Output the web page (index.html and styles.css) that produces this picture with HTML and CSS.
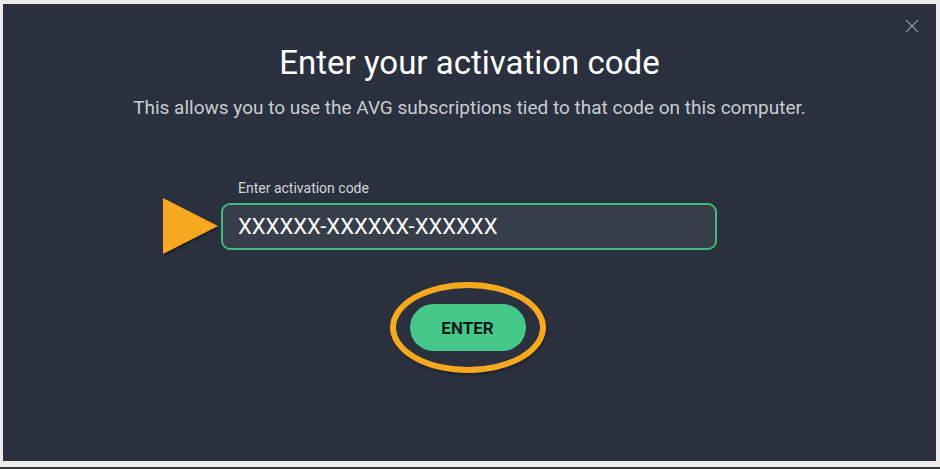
FILE: index.html
```html
<!DOCTYPE html>
<html>
<head>
<meta charset="utf-8">
<link rel="stylesheet" href="styles.css">
</head>
<body>
<div class="frame">
  <div class="panel">
    <button class="close" aria-label="Close">
      <svg width="14" height="14" viewBox="0 0 14 14"><path d="M1 1L13 13M13 1L1 13" stroke="#8a8f99" stroke-width="1.3" fill="none"/></svg>
    </button>
    <h1 class="title">Enter your activation code</h1>
    <p class="subtitle">This allows you to use the AVG subscriptions tied to that code on this computer.</p>
    <div class="field">
      <label class="label">Enter activation code</label>
      <div class="input-row">
        <svg class="pointer" width="56" height="56" viewBox="0 0 56 56"><polygon points="0,0 55,28 0,56" fill="#f6a91f"/></svg>
        <div class="input">XXXXXX-XXXXXX-XXXXXX</div>
      </div>
    </div>
    <div class="btn-wrap">
      <div class="ring"></div>
      <button class="enter">ENTER</button>
    </div>
  </div>
  <div class="bottom-bar"></div>
</div>
</body>
</html>
```
FILE: styles.css
```css
html, body {
  margin: 0;
  padding: 0;
}
body {
  background: #ebebeb;
  width: 940px;
  height: 469px;
  overflow: hidden;
  font-family: Roboto, "Liberation Sans", sans-serif;
}
.frame {
  padding: 4px 4px 0 3px;
  display: flex;
  flex-direction: column;
}
.panel {
  position: relative;
  height: 457px;
  background: #2a303d;
  display: flex;
  flex-direction: column;
  align-items: center;
  box-sizing: border-box;
  padding-top: 39px;
}
.bottom-bar {
  margin-top: 6px;
  height: 3px;
  background: #3a3a3a;
  margin-left: -3px;
  margin-right: -4px;
}
.close {
  position: absolute;
  top: 15px;
  right: 17px;
  background: none;
  border: 0;
  padding: 0;
  width: 14px;
  height: 14px;
  display: flex;
}
.title {
  margin: 0;
  font-weight: 400;
  font-size: 33px;
  line-height: 40px;
  color: #ffffff;
}
.subtitle {
  margin: 13px 0 0;
  font-size: 19px;
  line-height: 24px;
  color: #c9ccd2;
}
.field {
  align-self: flex-start;
  margin-top: 59px;
  margin-left: 160px;
  display: flex;
  flex-direction: column;
}
.label {
  margin-left: 75px;
  font-size: 14px;
  line-height: 18px;
  color: #d2d5da;
}
.input-row {
  display: flex;
  align-items: center;
  margin-top: 6px;
}
.pointer {
  display: block;
  margin: -5px 2px -4px 0;
  filter: drop-shadow(1px 2px 1px rgba(0,0,0,0.35));
}
.input {
  width: 496px;
  height: 47px;
  box-sizing: border-box;
  border: 2px solid #3dba7c;
  border-radius: 9px;
  background: #383d4a;
  color: #ffffff;
  font-size: 22px;
  display: flex;
  align-items: center;
  padding-left: 15px;
}
.btn-wrap {
  position: relative;
  margin-top: 54px;
  width: 116px;
  height: 47px;
  margin-left: -4px;
}
.ring {
  position: absolute;
  left: -20px;
  top: -22px;
  width: 144px;
  height: 79px;
  border: 6px solid #f6a91f;
  border-radius: 50%;
  box-shadow: 1px 2px 3px rgba(0,0,0,0.3);
}
.enter {
  position: relative;
  width: 116px;
  height: 47px;
  border: 0;
  border-radius: 24px;
  background: #44c98a;
  color: #15191c;
  font-family: Roboto, "Liberation Sans", sans-serif;
  font-weight: 700;
  font-size: 17px;
  padding: 0;
}
```
